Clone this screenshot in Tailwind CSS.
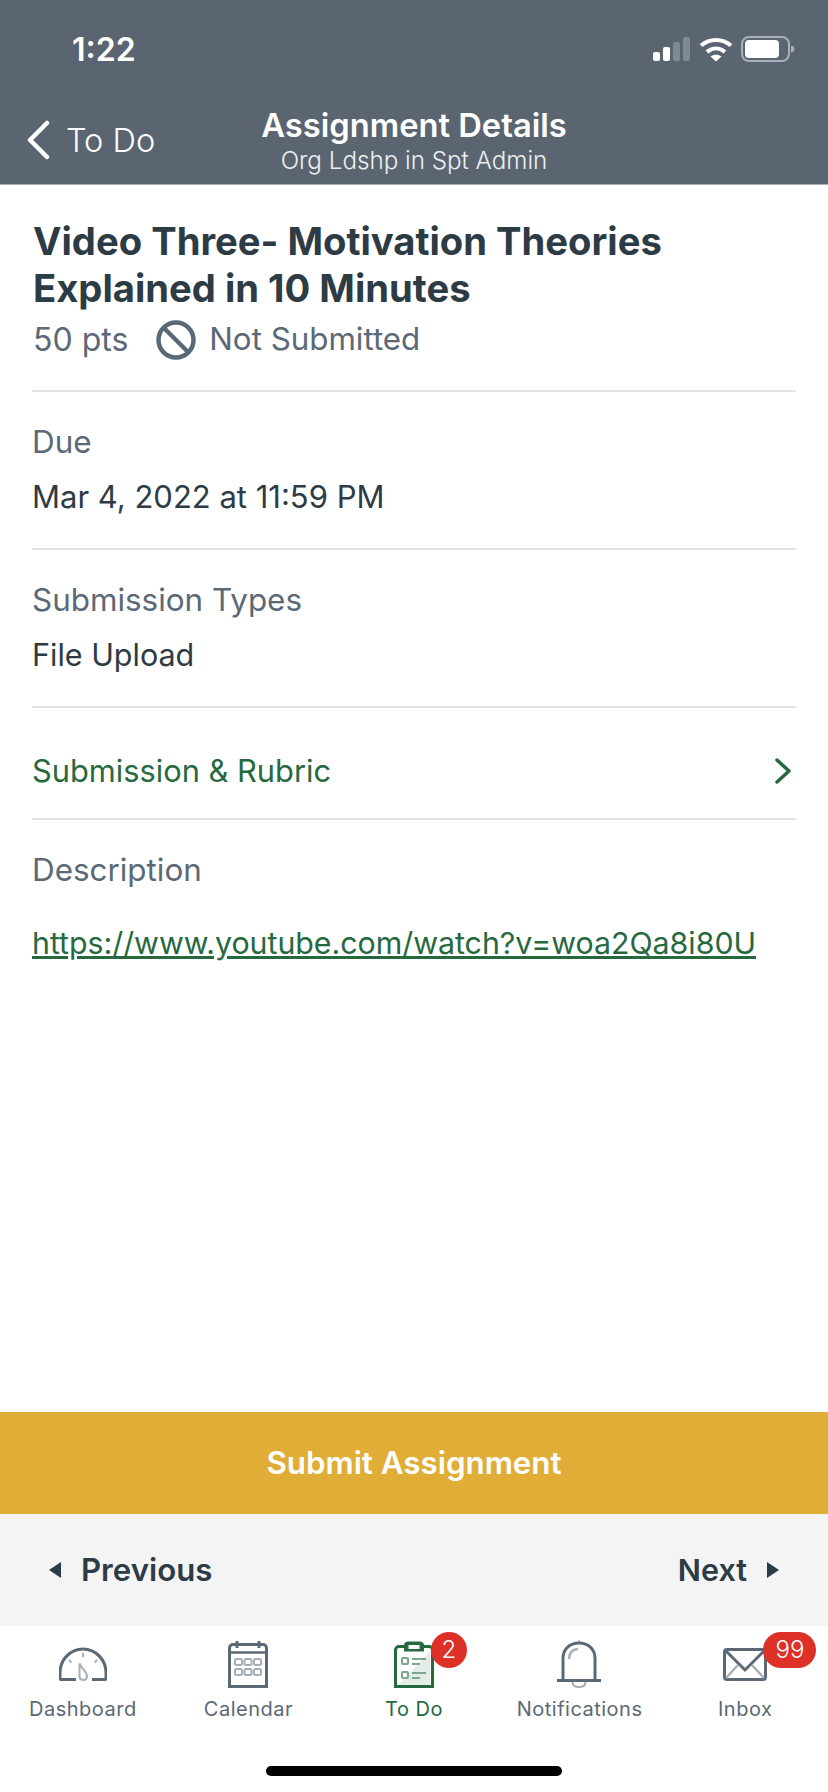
<!DOCTYPE html>
<html lang="en">
<head>
  <meta charset="UTF-8" />
  <meta name="viewport" content="width=device-width, initial-scale=1.0"/>
  <title>Assignment Details</title>
  <script src="https://cdn.jsdelivr.net/npm/@tailwindcss/browser@4"></script>
</head>
<body class="bg-white">
  <div class="w-[828px] h-[1792px] flex flex-col font-['Inter',sans-serif] overflow-hidden">
    <!-- Header -->
    <header class="h-[185px] shrink-0 bg-[#5a6571] border-b border-[#a9aeb4] text-white flex flex-col">
      <div class="h-[98px] shrink-0 flex items-center justify-between pl-[72px] pr-[33px]">
        <span class="text-[32px] leading-none font-semibold mt-[2px]">1:22</span>
        <div class="flex items-center gap-[8px]">
          <!-- signal -->
          <svg class="w-[38px] h-[24px]" viewBox="0 0 38 24">
            <rect x="0" y="15" width="7" height="9" rx="2" fill="#fff"/>
            <rect x="10" y="10" width="7" height="14" rx="2" fill="#fff"/>
            <rect x="20" y="5" width="7" height="19" rx="2" fill="#7f8a96"/>
            <rect x="30" y="0" width="7" height="24" rx="2" fill="#7f8a96"/>
          </svg>
          <!-- wifi -->
          <svg class="w-[34px] h-[26px]" viewBox="0 0 34 26" fill="none" stroke="#fff" stroke-width="4">
            <path d="M2 9.5C10.500 2 23.500 2 32 9.500"/>
            <path d="M8 16C13.500 11.200 20.500 11.200 26 16"/>
            <path d="M17 25.500L11.500 20.500C14.500 18 19.500 18 22.500 20.500Z" fill="#fff" stroke="none"/>
          </svg>
          <!-- battery -->
          <svg class="w-[54px] h-[26px]" viewBox="0 0 54 26">
            <rect x="1" y="1" width="47" height="24" rx="7" fill="none" stroke="#aab0b7" stroke-width="2"/>
            <rect x="4" y="4" width="34" height="18" rx="4" fill="#fff"/>
            <path d="M50 9.500C52.500 10 53.500 11.500 53.500 13C53.500 14.500 52.500 16 50 16.500Z" fill="#aab0b7"/>
          </svg>
        </div>
      </div>
      <div class="relative flex-1">
        <div class="absolute left-[26px] top-[22px] flex items-center gap-[16px]">
          <svg class="w-[24px] h-[40px]" viewBox="0 0 24 40" fill="none" stroke="#fff" stroke-width="4.500" stroke-linecap="round" stroke-linejoin="round">
            <path d="M21 3L4 20L21 37"/>
          </svg>
          <span class="text-[32.500px] leading-none font-light mt-[2px]">To Do</span>
        </div>
        <div class="flex flex-col items-center">
          <span class="text-[32.700px] leading-[38px] font-semibold mt-[8px]">Assignment Details</span>
          <span class="text-[24.200px] leading-[28px] font-light text-white/90 mt-[3px]">Org Ldshp in Spt Admin</span>
        </div>
      </div>
    </header>

    <!-- Content -->
    <main class="flex-1 px-[32px] text-[#2d3b45]">
      <section class="h-[207px] pt-[33px] border-b-2 border-[#e4e4e4]">
        <h1 class="text-[38.200px] leading-[47px] font-bold ml-[1px]">Video Three- Motivation Theories<br>Explained in 10 Minutes</h1>
        <div class="flex items-center h-[54px] pt-[1px] text-[#5b6875]">
          <span class="text-[32px] ml-[1px]">50 pts</span>
          <svg class="w-[40px] h-[40px] ml-[28px] mr-[13px]" viewBox="0 0 40 40" fill="none" stroke="#5b6875" stroke-width="4.500">
            <circle cx="20" cy="20" r="17.500"/>
            <path d="M8 8L32 32"/>
          </svg>
          <span class="text-[31.300px]">Not Submitted</span>
        </div>
      </section>
      <section class="h-[158px] pt-[30px] border-b-2 border-[#e4e4e4]">
        <div class="text-[31.400px] leading-[40px] text-[#5b6875]">Due</div>
        <div class="text-[31px] leading-[40px] mt-[15px]">Mar 4, 2022 at 11:59 PM</div>
      </section>
      <section class="h-[158px] pt-[30px] border-b-2 border-[#e4e4e4]">
        <div class="text-[31.400px] leading-[40px] text-[#5b6875]">Submission Types</div>
        <div class="text-[30.500px] leading-[40px] mt-[15px]">File Upload</div>
      </section>
      <section class="h-[112px] pt-[16px] flex items-center justify-between border-b-2 border-[#e4e4e4] text-[#26693f] pr-[5px]">
        <span class="text-[30.800px] leading-[40px]">Submission &amp; Rubric</span>
        <svg class="w-[16px] h-[26px]" viewBox="0 0 16 26" fill="none" stroke="#26693f" stroke-width="3.500" stroke-linecap="round" stroke-linejoin="round">
          <path d="M2 2L14 13L2 24"/>
        </svg>
      </section>
      <section class="pt-[30px]">
        <div class="text-[31.400px] leading-[40px] text-[#5b6875]">Description</div>
        <a class="block mt-[33px] text-[30.300px] leading-[40px] text-[#26693f] underline">https://www.youtube.com/watch?v=woa2Qa8i80U</a>
      </section>
    </main>

    <!-- Submit -->
    <button class="h-[102px] shrink-0 bg-[#e0ad37] text-white text-[31.300px] font-semibold">Submit Assignment</button>

    <!-- Previous / Next -->
    <div class="h-[112px] shrink-0 bg-[#f4f4f4] flex items-center justify-between px-[49px] text-[#2d3b45] font-semibold">
      <div class="flex items-center gap-[20px]">
        <svg class="w-[12px] h-[16px]" viewBox="0 0 12 16" fill="#2d3b45"><path d="M12 0V16L0 8Z"/></svg>
        <span class="text-[31.200px]">Previous</span>
      </div>
      <div class="flex items-center gap-[20px]">
        <span class="text-[30.500px]">Next</span>
        <svg class="w-[12px] h-[16px]" viewBox="0 0 12 16" fill="#2d3b45"><path d="M0 0V16L12 8Z"/></svg>
      </div>
    </div>

    <!-- Tab bar -->
    <nav class="h-[166px] shrink-0 bg-white relative">
      <div class="grid grid-cols-5 pt-[14px] text-[20px] leading-[24px] tracking-[0.5px] text-[#5b6875]">
        <div class="flex flex-col items-center">
          <div class="h-[48px] flex items-center justify-center">
            <svg class="w-[48px] h-[34px]" viewBox="0 0 48 34" fill="none">
              <path d="M17 32.500H2C1.200 32.500 1 31.500 1 30.500V26C1 13 11 2 24 2C37 2 47 13 47 26V30.500C47 31.500 46.800 32.500 46 32.500H33" stroke="#5b6875" stroke-width="3"/>
              <path d="M24 6V10M10 13L12.500 15.500M38 13L35.500 15.500" stroke="#a7afb6" stroke-width="2"/>
              <path d="M20.500 16.500C23 22 28 25 28 29C28 31.500 26.500 33 24.500 33C22 33 20.500 31.500 20.500 29Z" stroke="#a7afb6" stroke-width="2"/>
            </svg>
          </div>
          <span class="mt-[9px]">Dashboard</span>
        </div>
        <div class="flex flex-col items-center">
          <svg class="w-[40px] h-[48px]" viewBox="0 0 40 48" fill="none">
            <path d="M1.500 46.500V8C1.500 6 3 4.500 5 4.500H35C37 4.500 38.500 6 38.500 8V46.500Z" stroke="#5b6875" stroke-width="3"/>
            <path d="M1.500 12.500H38.500" stroke="#5b6875" stroke-width="2.500"/>
            <path d="M9 1V8M31 1V8" stroke="#5b6875" stroke-width="3"/>
            <g stroke="#a7afb6" stroke-width="2">
              <rect x="7" y="19" width="7" height="6" rx="1.500"/><rect x="16.500" y="19" width="7" height="6" rx="1.500"/><rect x="26" y="19" width="7" height="6" rx="1.500"/>
              <rect x="7" y="29" width="7" height="6" rx="1.500"/><rect x="16.500" y="29" width="7" height="6" rx="1.500"/><rect x="26" y="29" width="7" height="6" rx="1.500"/>
            </g>
          </svg>
          <span class="mt-[9px]">Calendar</span>
        </div>
        <div class="flex flex-col items-center text-[#26693f] relative">
          <svg class="w-[40px] h-[48px]" viewBox="0 0 40 48" fill="none">
            <path d="M36 12L4 44V12Z" fill="#fff"/>
            <path d="M36 12V45H4Z" fill="#e4ece7"/>
            <path d="M10 6.500H5C3 6.500 1.500 8 1.500 10V46.500H38.500V10C38.500 8 37 6.500 35 6.500H30" stroke="#26693f" stroke-width="3"/>
            <path d="M10 11.500V5C10 3 12 1.500 14 1.500H26C28 1.500 30 3 30 5V11.500Z" fill="#26693f"/>
            <rect x="14.500" y="5" width="11" height="4" fill="#fff"/>
            <g stroke="#7ea68c" stroke-width="2">
              <rect x="8" y="18" width="6" height="6" rx="1"/><rect x="8" y="32" width="6" height="6" rx="1"/>
            </g>
            <path d="M18 19H32M18 24H26M18 33H32M18 38H26" stroke="#7ea68c" stroke-width="2"/>
          </svg>
          <span class="mt-[9px]">To Do</span>
          <span class="absolute left-[100px] top-[-8px] w-[36px] h-[36px] rounded-full bg-[#dd3027] text-white text-[24px] leading-none font-light flex items-center justify-center">2</span>
        </div>
        <div class="flex flex-col items-center">
          <svg class="w-[44px] h-[48px] -translate-x-[1px]" viewBox="0 0 44 48" fill="none">
            <path d="M22 0V3" stroke="#a7afb6" stroke-width="1.500"/>
            <path d="M6 40.500V18C6 9 13 3 22 3C31 3 38 9 38 18V40.500" stroke="#5b6875" stroke-width="3"/>
            <path d="M0 40.500H44" stroke="#5b6875" stroke-width="3"/>
            <path d="M12 19C12 13 15 9.500 21 9" stroke="#a7afb6" stroke-width="2.500"/>
            <path d="M15.500 42C15.500 45 18 47 22 47C26 47 28.500 45 28.500 42" stroke="#a7afb6" stroke-width="2"/>
          </svg>
          <span class="mt-[9px]">Notifications</span>
        </div>
        <div class="flex flex-col items-center relative">
          <div class="h-[48px] flex items-center justify-center">
            <svg class="w-[44px] h-[33px]" viewBox="0 0 44 33" fill="none">
              <rect x="1.500" y="1.500" width="41" height="30" rx="2.500" stroke="#5b6875" stroke-width="3"/>
              <path d="M3 3L22 22L41 3" stroke="#5b6875" stroke-width="3"/>
              <path d="M3 30L15 17M41 30L29 17" stroke="#a7afb6" stroke-width="2.500"/>
            </svg>
          </div>
          <span class="mt-[9px]">Inbox</span>
          <span class="absolute left-[101px] top-[-8px] w-[53px] h-[36px] rounded-full bg-[#dd3027] text-white text-[24px] leading-none font-light tracking-normal flex items-center justify-center">99</span>
        </div>
      </div>
      <div class="absolute left-[266px] top-[140px] w-[296px] h-[10px] rounded-full bg-black"></div>
    </nav>
  </div>
</body>
</html>
